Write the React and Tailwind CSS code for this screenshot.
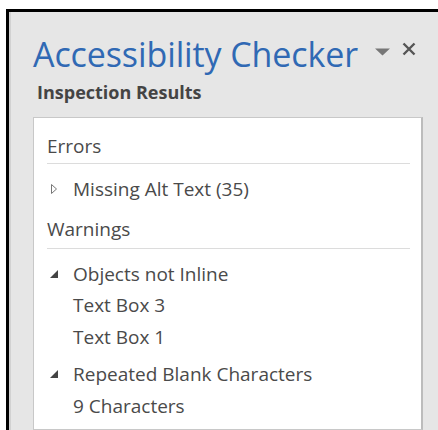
import React from 'react';

const font = { fontFamily: '"Open Sans", "Noto Sans", sans-serif' };

const Caret = ({ open }) =>
  open ? (
    <svg width="10" height="10" viewBox="0 0 10 10" className="shrink-0">
      <path d="M9 1 L9 9 L1 9 Z" fill="#444" />
    </svg>
  ) : (
    <svg width="10" height="12" viewBox="0 0 10 12" className="shrink-0">
      <path d="M2.5 1.5 L7.5 6 L2.5 10.5 Z" fill="none" stroke="#777" strokeWidth="1" />
    </svg>
  );

const GroupRow = ({ open, label, pad }) => (
  <div className={`flex items-center leading-[24px] ${pad}`}>
    <span className="w-[26px] pl-[2px] flex items-center">
      <Caret open={open} />
    </span>
    <span>{label}</span>
  </div>
);

const LeafRow = ({ label, pad }) => (
  <div className={`pl-[26px] leading-[24px] ${pad}`}>{label}</div>
);

export default function App() {
  return (
    <div className="w-[438px] h-[430px] bg-white pt-[9px] pl-[6px] overflow-hidden" style={font}>
      <div className="h-full border-l-[3px] border-t-[3px] border-black bg-[#e6e6e6] flex">
        <div className="w-[2px] bg-[#d2d2d2] shrink-0" />
        <div className="flex-1 pl-[22px] flex flex-col">
          {/* pane header */}
          <div className="flex items-start pt-[19px]">
            <h1 className="text-[34px] leading-[46px] text-[#3069b4] tracking-[-0.1px]">Accessibility Checker</h1>
            <div className="flex items-start gap-[12px] ml-[17px] mt-[17px]">
              <svg width="15" height="8" viewBox="0 0 15 8">
                <path d="M0 0.5 L15 0.5 L7.5 7.5 Z" fill="#777" />
              </svg>
              <svg width="14" height="14" viewBox="0 0 14 14" className="-mt-[6px]">
                <path d="M1.5 1.5 L12.5 12.5 M12.5 1.5 L1.5 12.5" stroke="#555" strokeWidth="2.4" />
              </svg>
            </div>
          </div>
          <div className="text-[18px] font-bold text-[#444] leading-[24px] mt-[3px] pl-[4px]">Inspection Results</div>

          {/* results list */}
          <div className="mt-[13px] mr-[15px] flex-1 bg-white border border-[#c8c8c8] border-r-2 border-r-[#bcbcbc] pl-[13px] pr-[11px] text-[19px] text-[#4a4a4a]">
            <div className="pt-[16px] pb-[5px] leading-[24px] border-b border-[#dcdcdc]">Errors</div>
            <GroupRow open={false} label="Missing Alt Text (35)" pad="pt-[13px]" />
            <div className="pt-[16px] pb-[7px] leading-[24px] border-b border-[#dcdcdc]">Warnings</div>
            <GroupRow open label="Objects not Inline" pad="pt-[13px]" />
            <LeafRow label="Text Box 3" pad="pt-[7px]" />
            <LeafRow label="Text Box 1" pad="pt-[8px]" />
            <GroupRow open label="Repeated Blank Characters" pad="pt-[13px]" />
            <LeafRow label="9 Characters" pad="pt-[8px]" />
          </div>
        </div>
      </div>
    </div>
  );
}
